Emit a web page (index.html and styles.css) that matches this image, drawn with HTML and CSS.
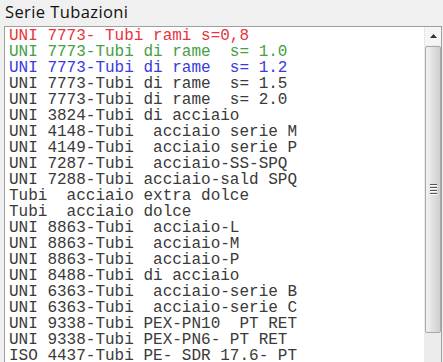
FILE: index.html
```html
<!DOCTYPE html>
<html lang="it">
<head>
    <meta charset="UTF-8">
    <title>Serie Tubazioni</title>
    <link rel="stylesheet" href="styles.css">
</head>
<body>
    <div class="title">Serie Tubazioni</div>
    <div class="listbox">
        <div class="items">
            <div class="red">UNI 7773- Tubi rami s=0,8</div>
            <div class="green">UNI 7773-Tubi di rame  s= 1.0</div>
            <div class="blue">UNI 7773-Tubi di rame  s= 1.2</div>
            <div>UNI 7773-Tubi di rame  s= 1.5</div>
            <div>UNI 7773-Tubi di rame  s= 2.0</div>
            <div>UNI 3824-Tubi di acciaio</div>
            <div>UNI 4148-Tubi  acciaio serie M</div>
            <div>UNI 4149-Tubi  acciaio serie P</div>
            <div>UNI 7287-Tubi  acciaio-SS-SPQ</div>
            <div>UNI 7288-Tubi acciaio-sald SPQ</div>
            <div>Tubi  acciaio extra dolce</div>
            <div>Tubi  acciaio dolce</div>
            <div>UNI 8863-Tubi  acciaio-L</div>
            <div>UNI 8863-Tubi  acciaio-M</div>
            <div>UNI 8863-Tubi  acciaio-P</div>
            <div>UNI 8488-Tubi di acciaio</div>
            <div>UNI 6363-Tubi  acciaio-serie B</div>
            <div>UNI 6363-Tubi  acciaio-serie C</div>
            <div>UNI 9338-Tubi PEX-PN10  PT RET</div>
            <div>UNI 9338-Tubi PEX-PN6- PT RET</div>
            <div>ISO 4437-Tubi PE- SDR 17.6- PT</div>
        </div>
        <div class="scrollbar">
            <div class="arrow-up">
                <svg width="7" height="4" viewBox="0 0 7 4"><path d="M0 4 L3.5 0 L7 4 Z" fill="#333"/></svg>
            </div>
            <div class="thumb">
                <div class="grip"></div>
                <div class="grip"></div>
                <div class="grip"></div>
                <div class="grip"></div>
            </div>
            <div class="track"></div>
        </div>
    </div>
</body>
</html>
```

FILE: styles.css
```css
body {
    margin: 0;
    background: #f0f0f0;
    overflow: hidden;
    height: 362px;
}
.title {
    font-family: "Open Sans", Arial, sans-serif;
    font-size: 16.5px;
    letter-spacing: 0.4px;
    color: #111;
    height: 26px;
    line-height: 24px;
    padding-left: 5px;
}
.listbox {
    display: flex;
    margin-left: 4px;
    width: 436px;
    height: 380px;
    background: #fff;
    border: 1px solid #a0a0a0;
}
.items {
    flex: 1;
    padding: 1px 0 0 4px;
    font-family: "Liberation Mono", "Courier New", monospace;
    font-size: 16px;
    line-height: 16px;
    color: #3a3a3a;
}
.items div {
    white-space: pre;
    height: 16px;
}
.red { color: #e8343e; }
.green { color: #45a045; }
.blue { color: #3a3ade; }
.scrollbar {
    width: 17px;
    display: flex;
    flex-direction: column;
    background: #ededed;
}
.arrow-up {
    height: 18px;
    display: flex;
    align-items: center;
    justify-content: center;
    background: #f5f5f5;
    border-left: 1px solid #e6e6e6;
}
.thumb {
    height: 285px;
    margin: 1px 0 0 1px;
    border: 1px solid #a8a8a8;
    border-radius: 2px;
    background: linear-gradient(to right, #f2f2f2, #e0e0e0 50%, #cfcfcf);
    display: flex;
    flex-direction: column;
    justify-content: center;
    align-items: center;
    gap: 1px;
}
.grip {
    width: 7px;
    height: 1px;
    background: #555;
    border-bottom: 1px solid #fff;
}
.track {
    flex: 1;
    background: #ececec;
}
```
